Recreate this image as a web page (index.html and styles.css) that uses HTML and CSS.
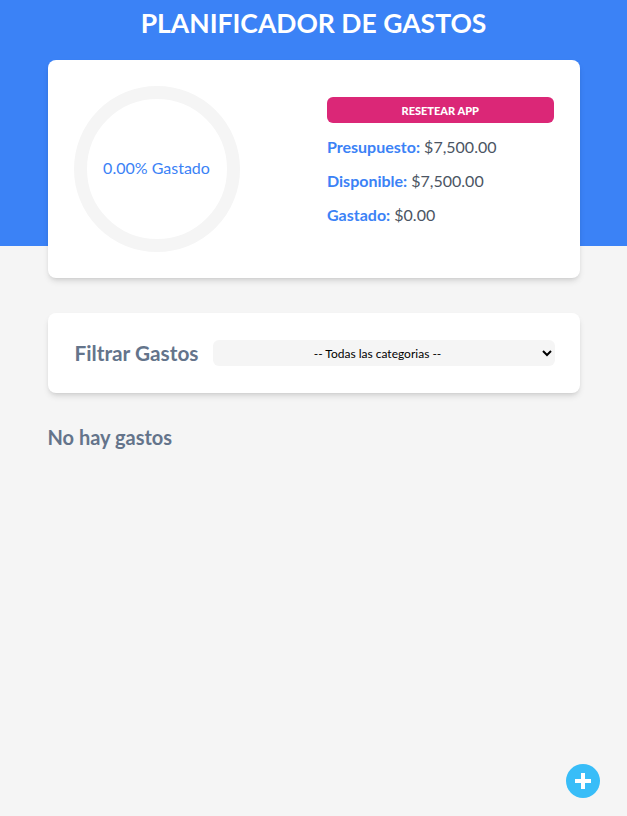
FILE: index.html
```html
<!DOCTYPE html>
<html lang="es">
<head>
<meta charset="utf-8">
<title>Planificador de Gastos</title>
<link rel="stylesheet" href="styles.css">
</head>
<body>
<header class="header">
  <h1 class="title">Planificador de Gastos</h1>
  <div class="card budget">
    <div class="progress">
      <svg class="ring" width="166" height="166" viewBox="0 0 166 166">
        <circle cx="83" cy="83" r="76.5" fill="none" stroke="#f5f5f5" stroke-width="13"/>
      </svg>
      <p class="progress-text">0.00% Gastado</p>
    </div>
    <div class="summary">
      <button class="reset" type="button">Resetear App</button>
      <p class="line"><span class="label">Presupuesto:</span> $7,500.00</p>
      <p class="line"><span class="label">Disponible:</span> $7,500.00</p>
      <p class="line"><span class="label">Gastado:</span> $0.00</p>
    </div>
  </div>
</header>
<main class="main">
  <div class="card filter">
    <label class="filter-label" for="cat">Filtrar Gastos</label>
    <select id="cat" class="filter-select">
      <option>-- Todas las categorias --</option>
    </select>
  </div>
  <h2 class="empty">No hay gastos</h2>
</main>
<button class="add" type="button" aria-label="Nuevo gasto">
  <svg width="34" height="34" viewBox="0 0 34 34"><circle cx="17" cy="17" r="17" fill="#38bdf8"/><rect x="15" y="9" width="4" height="16" fill="#fff"/><rect x="9" y="15" width="16" height="4" fill="#fff"/></svg>
</button>
</body>
</html>
```
FILE: styles.css
```css
* { box-sizing: border-box; }
html, body { margin: 0; padding: 0; }
body {
  background: #f5f5f5;
  font-family: Lato, "Open Sans", sans-serif;
  min-height: 816px;
}
.header {
  display: flow-root;
  background: #3b82f6;
  padding-top: 7px;
}
.title {
  margin: 0;
  color: #fff;
  text-align: center;
  text-transform: uppercase;
  font-size: 26.5px;
  line-height: 32px;
  font-weight: 700;
}
.card {
  width: 532px;
  margin: 0 auto;
  background: #fff;
  border-radius: 8px;
  box-shadow: 0 4px 6px -1px rgba(0,0,0,0.12), 0 2px 4px -2px rgba(0,0,0,0.1);
}
.budget {
  margin-top: 21px;
  margin-bottom: -32px;
  position: relative;
  padding: 26px;
  display: grid;
  grid-template-columns: 1fr 1fr;
  column-gap: 27px;
}
.progress {
  position: relative;
  width: 166px;
  height: 166px;
}
.ring { display: block; }
.progress-text {
  position: absolute;
  inset: 0;
  margin: 0;
  display: flex;
  align-items: center;
  justify-content: center;
  color: #3b82f6;
  font-size: 16px;
  padding-bottom: 3px;
}
.summary {
  padding-top: 11px;
  display: flex;
  flex-direction: column;
}
.reset {
  height: 26px;
  border: none;
  border-radius: 6px;
  background: #db2777;
  color: #fff;
  font-family: Lato, sans-serif;
  font-weight: 900;
  font-size: 11px;
  text-transform: uppercase;
  margin-bottom: 12px;
}
.line {
  margin: 0 0 10px;
  font-size: 16px;
  line-height: 24px;
  color: #4b5563;
}
.label {
  color: #3b82f6;
  font-weight: 700;
}
.main {
  padding-top: 67px;
}
.filter {
  padding: 27px 25px 27px 27px;
  display: flex;
  align-items: center;
  gap: 14px;
}
.filter-label {
  color: #64748b;
  font-weight: 700;
  font-size: 20.8px;
  line-height: 26px;
}
.filter-select {
  flex: 1;
  height: 26px;
  border: none;
  border-radius: 6px;
  background: #f5f5f5;
  font-family: Lato, sans-serif;
  font-size: 12px;
  color: #000;
  text-align: center;
}
.empty {
  width: 532px;
  margin: 31px auto 0;
  color: #64748b;
  font-size: 20px;
  line-height: 26px;
  font-weight: 700;
}
.add {
  position: fixed;
  right: 27px;
  bottom: 18px;
  width: 34px;
  height: 34px;
  padding: 0;
  border: none;
  background: none;
}
.add svg { display: block; }
```
